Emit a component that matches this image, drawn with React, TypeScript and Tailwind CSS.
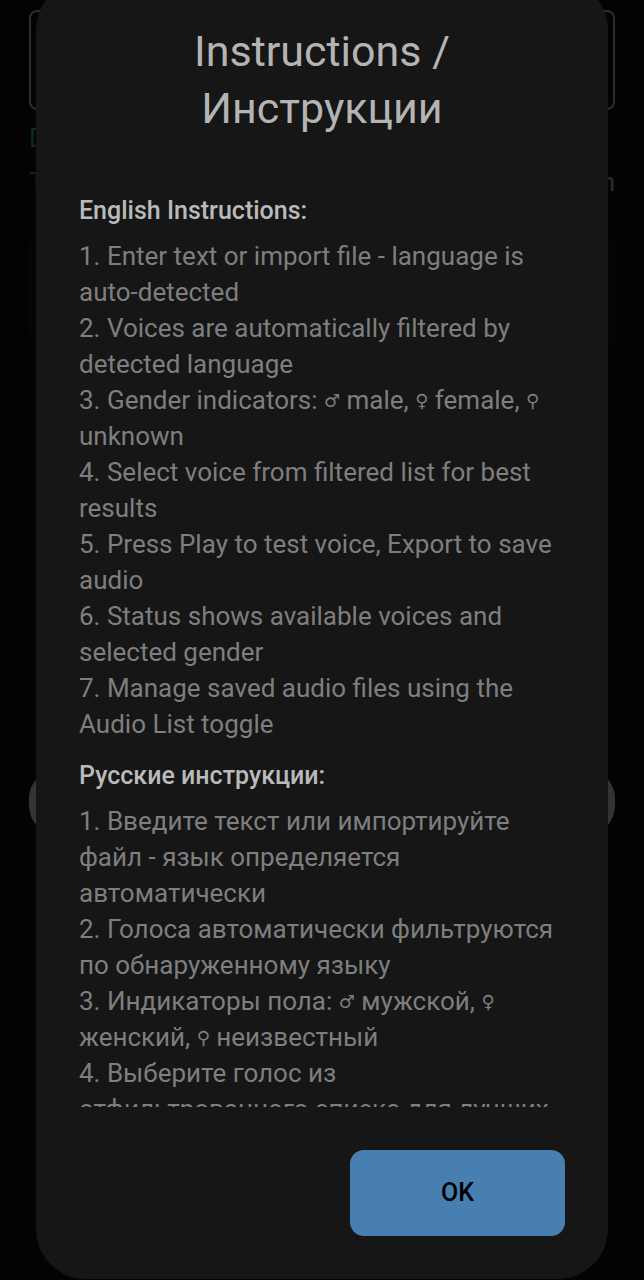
import type { ReactNode } from "react";

function Sign({ children }: { children: ReactNode }) {
  return (
    <span className="align-[2px] font-['DejaVu_Sans',sans-serif] text-[18px] leading-none font-normal">
      {children}
    </span>
  );
}

type Section = { heading: string; lang: string; steps: ReactNode[] };

const sections: Section[] = [
  {
    heading: "English Instructions:",
    lang: "en",
    steps: [
      "1. Enter text or import file - language is auto-detected",
      "2. Voices are automatically filtered by detected language",
      <>
        3. Gender indicators: <Sign>♂</Sign> male, <Sign>♀</Sign> female, <Sign>⚲</Sign> unknown
      </>,
      "4. Select voice from filtered list for best results",
      "5. Press Play to test voice, Export to save audio",
      "6. Status shows available voices and selected gender",
      "7. Manage saved audio files using the Audio List toggle",
    ],
  },
  {
    heading: "Русские инструкции:",
    lang: "ru",
    steps: [
      "1. Введите текст или импортируйте файл - язык определяется автоматически",
      "2. Голоса автоматически фильтруются по обнаруженному языку",
      <>
        3. Индикаторы пола: <Sign>♂</Sign> мужской, <Sign>♀</Sign> женский, <Sign>⚲</Sign> неизвестный
      </>,
      "4. Выберите голос из отфильтрованного списка для лучших",
    ],
  },
];

function Backdrop() {
  return (
    <div aria-hidden="true" className="flex flex-col px-[29px] pt-[10px] text-[26px] leading-9">
      <div className="h-[100px] rounded-lg border-2 border-[#2e2e2e]" />
      <div className="mt-[10px] text-[#0b2a2a]">D</div>
      <div className="mt-2 flex justify-between">
        <span className="text-[#14241c]">T</span>
        <span className="text-[#2e2e2e]">n</span>
      </div>
      <div className="mt-[33px] h-[112px] rounded-xl bg-[#050505]" />
      <div className="mt-[425px] h-[64px] rounded-[28px] bg-[#333333]" />
    </div>
  );
}

export default function App() {
  return (
    <div className="relative h-screen overflow-hidden bg-[#030303] font-[Roboto,sans-serif]">
      <Backdrop />
      <div className="absolute inset-x-0 -top-5 bottom-px flex px-9">
        <div
          role="dialog"
          aria-modal="true"
          aria-labelledby="dialog-title"
          className="flex min-w-0 flex-1 flex-col rounded-[50px] bg-[#161616] p-[43px]"
        >
          <h1
            id="dialog-title"
            className="px-20 text-center text-[43px] leading-[57px] text-[#b4b4b4]"
          >
            Instructions / Инструкции
          </h1>
          <div className="mt-14 flex min-h-0 flex-1 flex-col gap-4 overflow-hidden">
            {sections.map((section) => (
              <section key={section.lang} lang={section.lang} className="shrink-0">
                <h2 className="text-[25px] leading-9 font-medium text-[#bababa]">
                  {section.heading}
                </h2>
                <div className="mt-[9px] text-[26px] leading-9 text-[#7e7e7e]">
                  {section.steps.map((step, i) => (
                    <p key={i}>{step}</p>
                  ))}
                </div>
              </section>
            ))}
          </div>
          <button
            type="button"
            className="mt-[43px] h-[86px] w-[215px] shrink-0 self-end rounded-[14px] bg-[#4780b0] text-[25px] font-medium text-black"
          >
            OK
          </button>
        </div>
      </div>
    </div>
  );
}
